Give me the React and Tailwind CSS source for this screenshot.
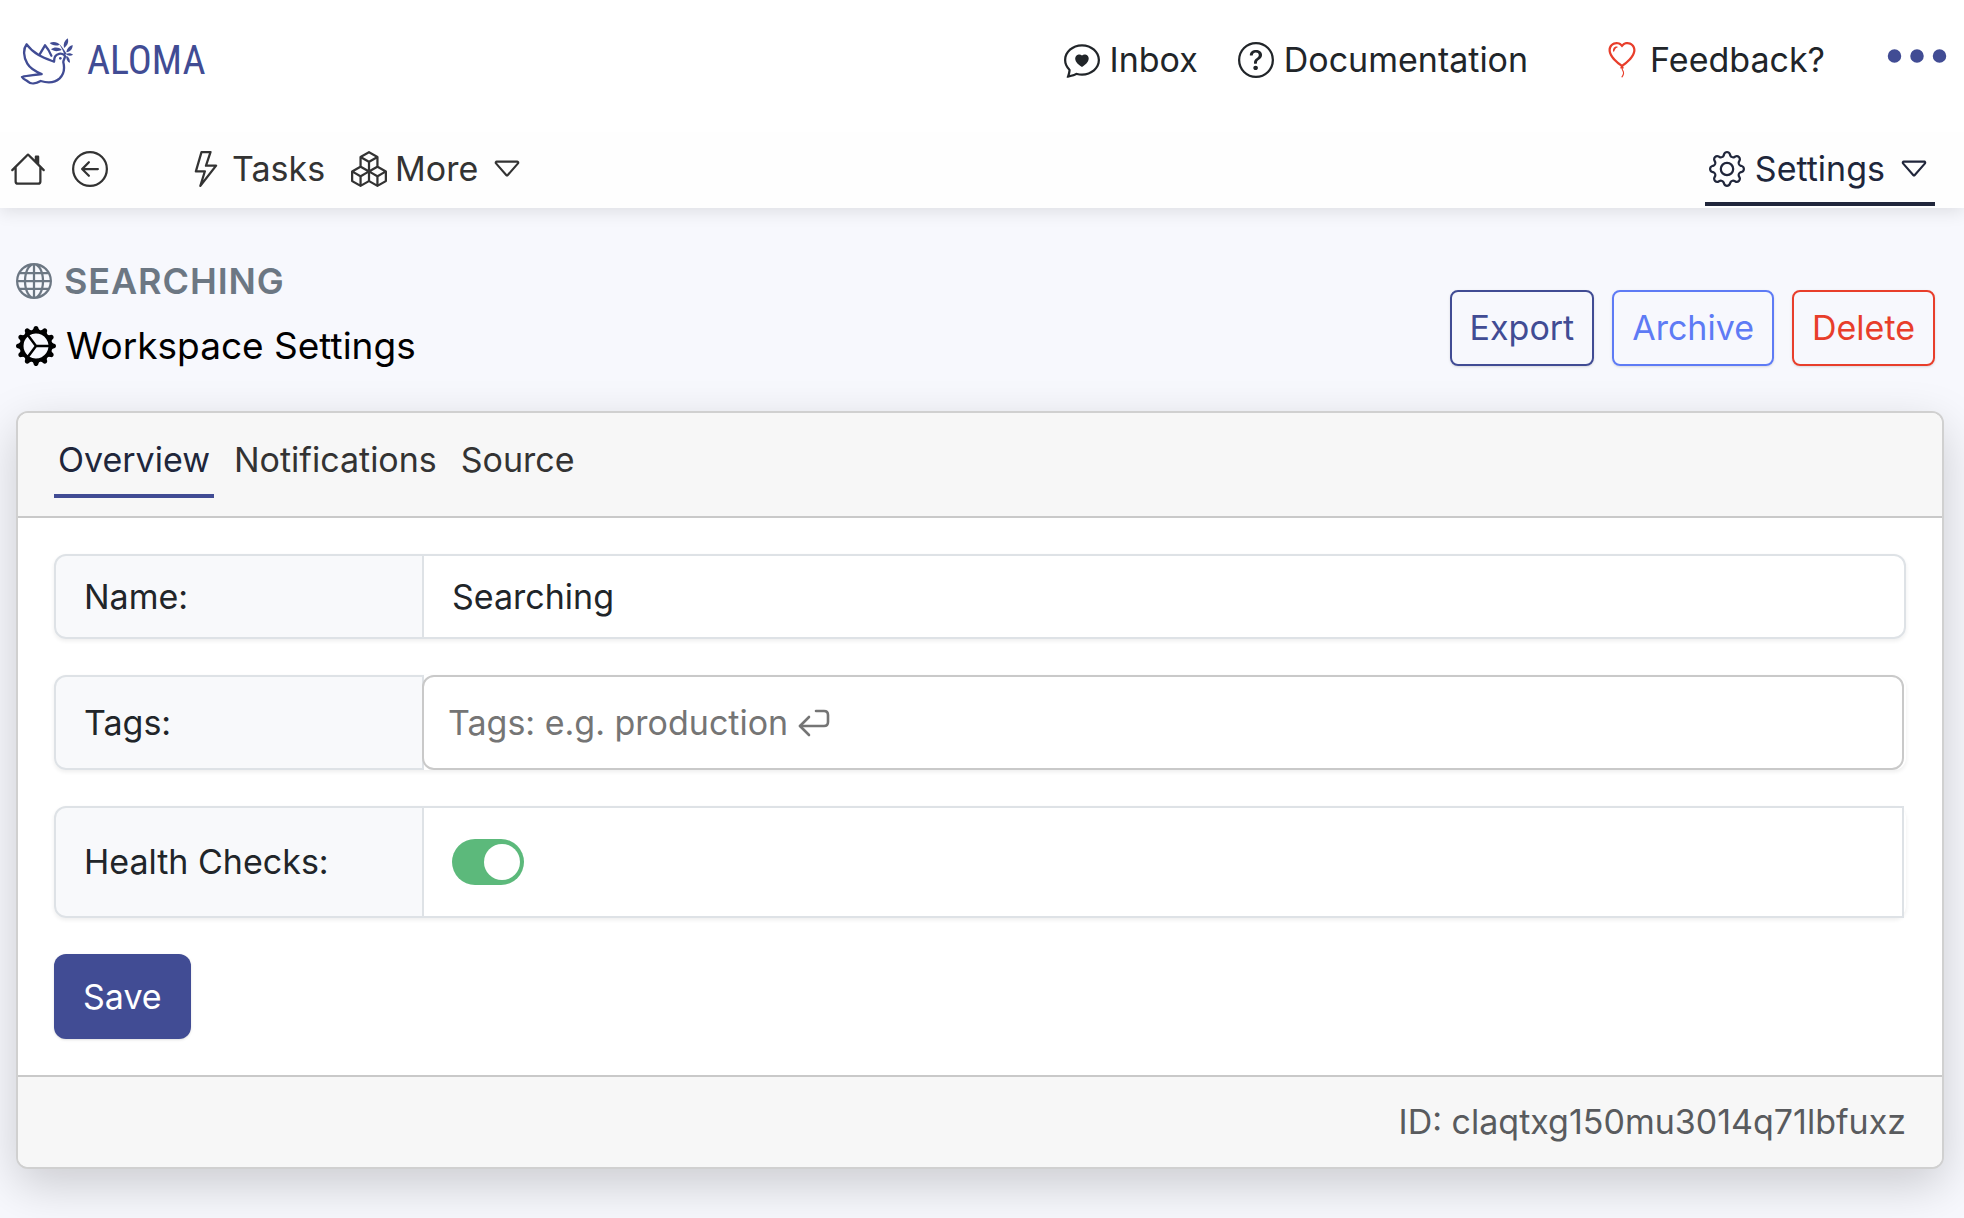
import { useState } from "react";
import {
  BsHouse,
  BsArrowLeftCircle,
  BsLightning,
  BsBoxes,
  BsCaretDown,
  BsGear,
  BsGlobe,
  BsGearWideConnected,
  BsChatHeart,
  BsQuestionCircle,
  BsBalloonHeart,
  BsThreeDots,
} from "react-icons/bs";

function Dove() {
  return (
    <svg viewBox="60 48 165 144" className="h-12 w-[55px]" fill="none" stroke="#414c94" strokeWidth="7" strokeLinecap="round" strokeLinejoin="round" aria-hidden="true">
      <path d="M80 70C69 84 70 108 82 128C91 143 107 152 125 159C104 163 84 163 66 168C71 176 80 178 84 182C92 190 108 188 122 180C145 187 166 184 179 172C191 160 195 144 190 124C189 116 199 108 193 102C183 95 170 98 165 107C162 113 163 117 162 122C136 112 103 102 80 70Z" />
      <path d="M119 100L135 73C142 81 149 92 154 104" />
      <path d="M192 102C200 106 204 112 207 122" strokeWidth="3" />
      <circle cx="181" cy="112" r="4" fill="#414c94" stroke="none" />
      <g fill="#414c94" stroke="none">
        <path d="M149 66C160 60 173 63 179 71C168 76 155 73 149 66Z" />
        <path d="M153 85C163 77 177 79 185 86C175 92 162 92 153 85Z" />
        <path d="M203 52C207 63 203 73 192 81C189 69 193 59 203 52Z" />
        <path d="M218 72C218 84 211 92 199 94C200 83 207 75 218 72Z" />
        <path d="M219 101C212 106 203 105 198 99C206 95 213 96 219 101Z" />
        <path d="M209 126C201 121 197 112 200 104C208 109 211 118 209 126Z" />
        <path d="M177 68C185 76 193 85 200 99L193 101C190 90 184 79 177 68Z" />
      </g>
    </svg>
  );
}

function ReturnArrow({ className }) {
  return (
    <svg viewBox="0 0 32 28" className={className} fill="none" stroke="currentColor" strokeWidth="2.6" strokeLinecap="round" strokeLinejoin="round" aria-hidden="true">
      <path d="M18 2H26Q30 2 30 6V13Q30 17 26 17H2" />
      <path d="M11 8L2 17L11 26" />
    </svg>
  );
}

const labelCell =
  "flex w-[370px] shrink-0 items-center rounded-l-xl border-2 border-[#dee2e6] bg-[#f8f9fb] px-7";

function Row({ id, label, className, children }) {
  return (
    <div className={`flex rounded-xl shadow-[0_2px_4px_rgba(0,0,0,0.07)] ${className}`}>
      <label htmlFor={id} className={labelCell}>
        {label}
      </label>
      {children}
    </div>
  );
}

export default function App() {
  const [name, setName] = useState("Searching");
  const [tags, setTags] = useState("");
  const [health, setHealth] = useState(true);

  return (
    <div className="min-h-screen bg-[#f7f8fd] font-['Inter',sans-serif] text-[34px] leading-[54px] text-[#212529]">
      <header className="relative z-10 flex h-[132px] items-start justify-between bg-white pt-[33px] pr-[11px] pl-5">
        <a href="#home" className="flex items-center gap-3 text-[#414c94]">
          <Dove />
          <span className="font-['Roboto_Condensed','Liberation_Sans_Narrow',Roboto,sans-serif] text-[40px] leading-[56px]">
            ALOMA
          </span>
        </a>
        <div className="flex items-center">
          <a href="#inbox" className="mr-10 flex items-center gap-2.5">
            <BsChatHeart className="size-9" />
            Inbox
          </a>
          <a href="#docs" className="mr-[76px] flex items-center gap-2.5">
            <BsQuestionCircle className="size-9" />
            Documentation
          </a>
          <a href="#feedback" className="mr-14 flex items-center gap-2.5">
            <BsBalloonHeart className="size-9 text-[#e83e2b]" />
            Feedback?
          </a>
          <button aria-label="Menu" className="-mt-2 text-[#414c94]">
            <BsThreeDots className="-my-4 size-[72px]" />
          </button>
        </div>
      </header>

      <nav className="relative flex h-[76px] items-start justify-between bg-[#fefefe] pr-[29px] pl-2.5 text-[#333] shadow-[0_4px_16px_rgba(0,0,0,0.1)]">
        <div className="flex items-center pt-2.5">
          <a href="#home" aria-label="Home" className="mr-[26px]">
            <BsHouse className="size-9" />
          </a>
          <a href="#back" aria-label="Back" className="mr-20">
            <BsArrowLeftCircle className="size-9" />
          </a>
          <a href="#tasks" className="mr-[26px] flex items-center gap-2">
            <BsLightning className="size-9" />
            Tasks
          </a>
          <button className="flex items-center gap-2">
            <BsBoxes className="size-9" />
            More
            <BsCaretDown className="ml-1 size-[34px]" />
          </button>
        </div>
        <button className="flex items-center gap-2.5 border-b-4 border-[#20263b] px-1 pt-2.5 pb-1.5 text-[#20263b]">
          <BsGear className="size-9" />
          Settings
          <BsCaretDown className="ml-0.5 size-[34px]" />
        </button>
      </nav>

      <main className="px-4 pt-[46px] pb-12">
        <div className="mb-[37px] flex items-center justify-between pr-[13px]">
          <div>
            <div className="flex items-center gap-3 text-[36px] leading-[54px] font-semibold tracking-wide text-[#6c7783]">
              <BsGlobe className="size-9" />
              SEARCHING
            </div>
            <h1 className="mt-2.5 flex items-center gap-2.5 text-[37px] leading-[56px] text-black">
              <BsGearWideConnected className="size-10" />
              Workspace Settings
            </h1>
          </div>
          <div className="mt-7 flex gap-[18px]">
            <button className="rounded-lg border-2 border-[#414c94] px-[18px] py-[9px] text-[#414c94] shadow-sm">Export</button>
            <button className="rounded-lg border-2 border-[#5e7bf5] px-[18px] py-[9px] text-[#5e7bf5] shadow-sm">Archive</button>
            <button className="rounded-lg border-2 border-[#e83e2b] px-[18px] py-[9px] text-[#e83e2b] shadow-sm">Delete</button>
          </div>
        </div>

        <section className="mr-1 overflow-hidden rounded-xl border-2 border-[#d0d0d0] bg-white shadow-[0_16px_48px_rgba(0,0,0,0.18)]">
          <div className="flex h-[105px] items-start gap-4 border-b-2 border-[#c9c9c9] bg-[#f7f7f7] px-9 pt-5 text-[#333]">
            <button className="border-b-4 border-[#414c94] px-1 pb-[7px] text-[#20263b]">Overview</button>
            <button className="px-1">Notifications</button>
            <button className="px-1">Source</button>
          </div>

          <form className="flex flex-col gap-9 px-9 py-9" onSubmit={(e) => e.preventDefault()}>
            <Row id="name" label="Name:" className="h-[85px]">
              <input
                id="name"
                value={name}
                onChange={(e) => setName(e.target.value)}
                className="-ml-0.5 min-w-0 flex-1 rounded-r-xl border-2 border-[#dee2e6] bg-white px-7 outline-none"
              />
            </Row>
            <Row id="tags" label="Tags:" className="h-[95px] pr-0.5">
              <div className="relative -ml-0.5 flex min-w-0 flex-1">
                <input
                  id="tags"
                  value={tags}
                  placeholder="Tags: e.g. production"
                  onChange={(e) => setTags(e.target.value)}
                  className="min-w-0 flex-1 rounded-xl border-2 border-[#c9c9c9] bg-white px-6 outline-none placeholder:text-[#757575]"
                />
                {tags === "" && (
                  <ReturnArrow className="pointer-events-none absolute top-[34px] left-[376px] h-7 w-8 text-[#757575]" />
                )}
              </div>
            </Row>
            <Row id="health" label="Health Checks:" className="h-[112px] pr-0.5">
              <div className="-ml-0.5 flex flex-1 items-center border-2 border-[#dee2e6] bg-white px-7">
                <input
                  id="health"
                  type="checkbox"
                  role="switch"
                  checked={health}
                  onChange={(e) => setHealth(e.target.checked)}
                  className="flex h-[46px] w-[72px] appearance-none items-center rounded-full bg-gray-300 px-1 before:size-9 before:rounded-full before:bg-white checked:justify-end checked:bg-[#5cb97b]"
                />
              </div>
            </Row>
            <button className="h-[85px] self-start rounded-xl bg-[#414c94] px-[29px] text-white shadow-sm">Save</button>
          </form>

          <footer className="border-t-2 border-[#c9c9c9] bg-[#f7f7f7] px-9 py-[18px] text-right text-[#595b5e]">
            ID: claqtxg150mu3014q71lbfuxz
          </footer>
        </section>
      </main>
    </div>
  );
}
